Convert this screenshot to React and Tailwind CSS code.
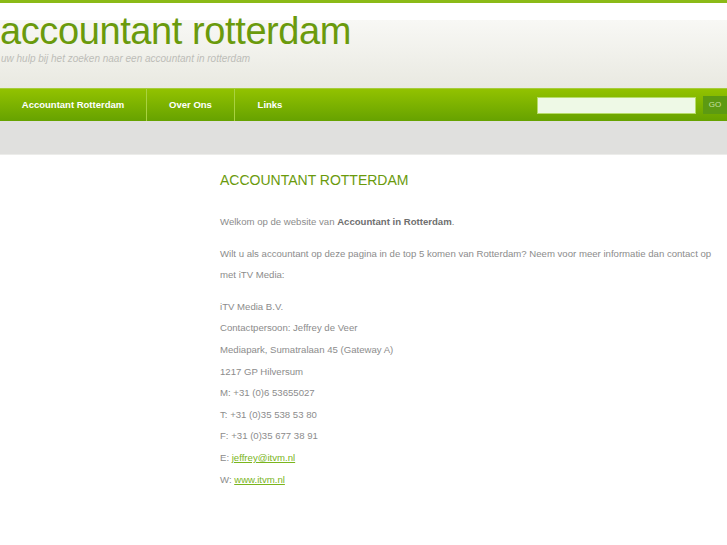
export default function App() {
  const sans = { fontFamily: '"Liberation Sans", Arial, sans-serif' }
  return (
    <div className="min-h-screen bg-white" style={sans}>
      {/* Header */}
      <div className="h-[3px] bg-[#8bba17]"></div>
      <div className="h-[86px] pt-[9px] bg-[linear-gradient(to_bottom,#ffffff_0px,#ffffff_17px,#f8f8f5_17px,#e9e9e1_100%)] border-b border-[#a6cc3a]">
        <h1 className="text-[38px] leading-[38px] text-[#6a9a0c] tracking-[-0.4px]">accountant rotterdam</h1>
        <p className="text-[10px] leading-[12px] italic text-[#bdbdb8] mt-[3px] ml-[1px]">uw hulp bij het zoeken naar een accountant in rotterdam</p>
      </div>

      {/* Nav */}
      <div className="h-[32px] bg-linear-to-b from-[#92c200] to-[#66a200] flex items-center">
        <a className="h-full w-[147px] flex items-center justify-center text-white font-bold text-[9.5px] border-r border-[#a9d240]">Accountant Rotterdam</a>
        <a className="h-full w-[88px] flex items-center justify-center text-white font-bold text-[9.5px] border-r border-[#a9d240]">Over Ons</a>
        <a className="h-full w-[70px] flex items-center justify-center text-white font-bold text-[9.5px]">Links</a>
        <div className="ml-auto flex items-center gap-[7px]">
          <input className="w-[159px] h-[17px] bg-[#eef9e6] border border-[#b7dc6a] outline-none" />
          <button className="w-[24px] h-[18px] bg-[#5c9a12] text-[#c8e0a0] text-[8px]">GO</button>
        </div>
      </div>
      <div className="h-[34px] bg-[#e0e0de] border-b border-[#ececea]"></div>

      {/* Content */}
      <div className="pl-[220px] pr-[4px] pt-[15px] text-[9.6px] text-[#8c8c8c] leading-[21.6px]">
        <h2 className="text-[14px] text-[#6a9a0c] leading-[20px] mb-[21px]">ACCOUNTANT ROTTERDAM</h2>
        <p className="mb-[10px]">Welkom op de website van <strong className="text-[#6f6f6f]">Accountant in Rotterdam</strong>.</p>
        <p className="mb-[10px]">Wilt u als accountant op deze pagina in de top 5 komen van Rotterdam? Neem voor meer informatie dan contact op met iTV Media:</p>
        <p>iTV Media B.V.</p>
        <p>Contactpersoon: Jeffrey de Veer</p>
        <p>Mediapark, Sumatralaan 45 (Gateway A)</p>
        <p>1217 GP Hilversum</p>
        <p>M: +31 (0)6 53655027</p>
        <p>T: +31 (0)35 538 53 80</p>
        <p>F: +31 (0)35 677 38 91</p>
        <p>E: <a className="text-[#7ab51d] underline">jeffrey@itvm.nl</a></p>
        <p>W: <a className="text-[#7ab51d] underline">www.itvm.nl</a></p>
      </div>
    </div>
  )
}
